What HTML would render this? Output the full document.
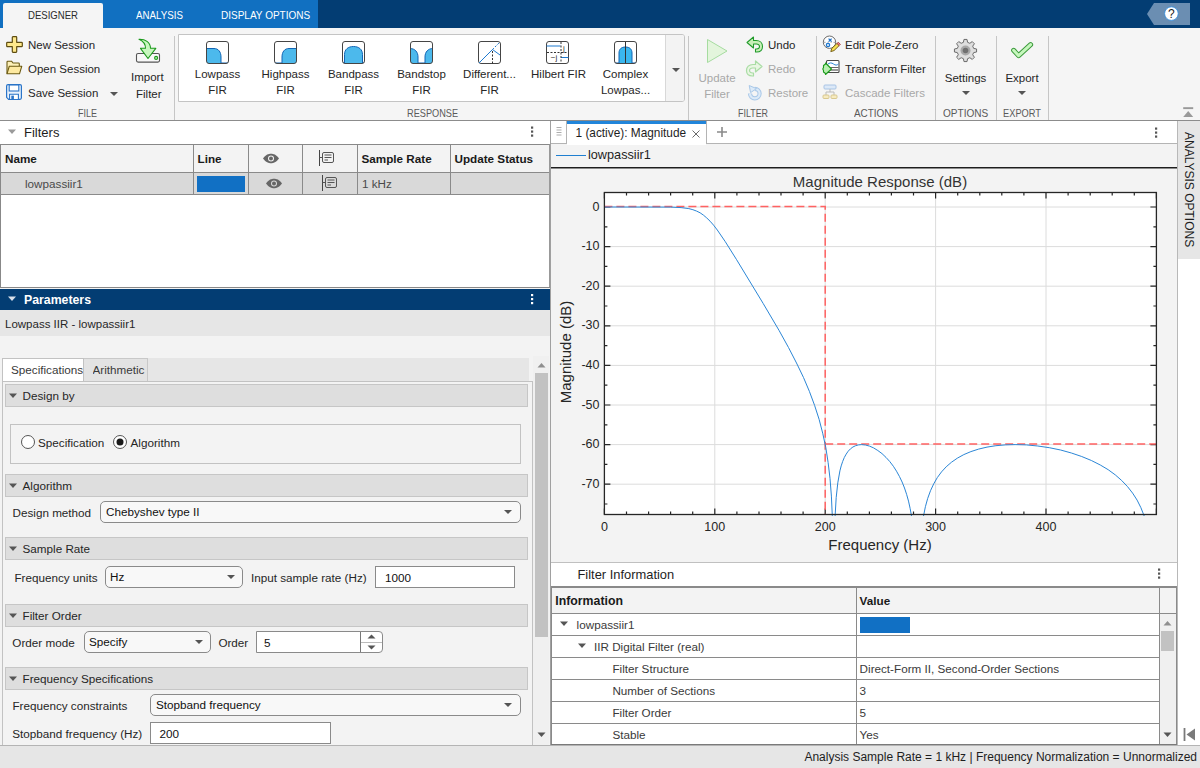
<!DOCTYPE html>
<html><head><meta charset="utf-8">
<style>
*{box-sizing:border-box;margin:0;padding:0}
html,body{width:1200px;height:768px;overflow:hidden;background:#f3f3f3;font-family:"Liberation Sans",sans-serif;font-size:12px;color:#212121}
.a{position:absolute}
.t{position:absolute;white-space:nowrap;line-height:1}
/* tab bar */
#tabbar{left:0;top:0;width:1200px;height:28px;background:#033d73}
#tabbar .lb{left:0;top:0;width:318px;height:28px;background:#1170c1}
#tstrip{left:0;top:28px;width:1200px;height:93px;background:#f5f5f5;border-bottom:1px solid #8c8c8c}
.sep{position:absolute;width:1px;background:#c6c6c6}
.slab{position:absolute;top:107.8px;transform-origin:0 0;font-size:11px;line-height:1;color:#5a5a5a}
.btxt{position:absolute;text-align:center;white-space:nowrap;line-height:1;font-size:11.5px;color:#262626}
.dis{color:#a8a8a8}
.tb{font-size:11.5px;color:#262626}
.tb.dis,.btxt.dis{color:#a8a8a8}
.bx{font-size:11.7px;color:#262626}
.sh{left:5px;width:523px;height:22.5px;background:#dedede;border:1px solid #c6c6c6}
.dd{background:#f8f8f8;border:1px solid #8a8a8a;border-radius:5px}
.ed{background:#fff;border:1px solid #8a8a8a}
.hb{font-size:11.7px;font-weight:bold;color:#1a1a1a}
.tri{width:0;height:0;border-left:4px solid transparent;border-right:4px solid transparent;border-top:4px solid #555}
</style></head><body>
<!-- TAB BAR -->
<div id="tabbar" class="a">
  <div class="a lb"></div>
  <div class="a" style="left:3px;top:3px;width:100px;height:25px;background:#f5f5f5;border-radius:2px 2px 0 0"></div>
  <div class="t" style="left:28px;top:9.8px;font-size:11px;color:#2b2b2b;transform:scaleX(.87);transform-origin:0 0">DESIGNER</div>
  <div class="t" style="left:135.7px;top:9.8px;font-size:11px;color:#fff;transform:scaleX(.887);transform-origin:0 0">ANALYSIS</div>
  <div class="t" style="left:220.7px;top:9.8px;font-size:11px;color:#fff;transform:scaleX(.91);transform-origin:0 0">DISPLAY OPTIONS</div>
  <svg class="a" style="left:1146px;top:3px" width="46" height="22" viewBox="0 0 46 22"><path d="M8 0H44V22H8L1 11Z" fill="#6b8eb2"/><circle cx="25.4" cy="10.6" r="6.8" fill="#fff" stroke="#2a8ae0" stroke-width=".8"/><text x="25.4" y="15" font-family="Liberation Sans" font-size="12" text-anchor="middle" fill="#222">?</text></svg>
</div>

<!-- TOOLSTRIP -->
<div id="tstrip" class="a"></div>
<div class="sep" style="left:174px;top:36px;height:84px"></div>
<div class="sep" style="left:688px;top:36px;height:84px"></div>
<div class="sep" style="left:816px;top:36px;height:84px"></div>
<div class="sep" style="left:935px;top:36px;height:84px"></div>
<div class="sep" style="left:996px;top:36px;height:84px"></div>
<div class="sep" style="left:1048px;top:36px;height:84px"></div>
<div class="slab" style="left:77.7px;transform:scaleX(0.818)">FILE</div>
<div class="slab" style="left:406.7px;transform:scaleX(0.835)">RESPONSE</div>
<div class="slab" style="left:737.7px;transform:scaleX(0.81)">FILTER</div>
<div class="slab" style="left:854px;transform:scaleX(0.9)">ACTIONS</div>
<div class="slab" style="left:943px;transform:scaleX(0.915)">OPTIONS</div>
<div class="slab" style="left:1003px;transform:scaleX(0.844)">EXPORT</div>
<!-- file -->
<svg class="a" style="left:6px;top:36px" width="17" height="17" viewBox="0 0 17 17"><path d="M6.3 1.5Q6.3 .7 7 .7H10Q10.7 .7 10.7 1.5V6.3H15.5Q16.3 6.3 16.3 7V10Q16.3 10.7 15.5 10.7H10.7V15.5Q10.7 16.3 10 16.3H7Q6.3 16.3 6.3 15.5V10.7H1.5Q.7 10.7 .7 10V7Q.7 6.3 1.5 6.3H6.3Z" fill="#ffe98c" stroke="#5e4d10" stroke-width="1.2" stroke-linejoin="round"/></svg>
<div class="t tb" style="left:28px;top:40px">New Session</div>
<svg class="a" style="left:5px;top:60px" width="18" height="15" viewBox="0 0 18 15"><path d="M2 13.8V2Q2 1.2 2.8 1.2H6.5L8 3H13.5Q14.3 3 14.3 3.8V6" fill="#fdf0b8" stroke="#6b5a12" stroke-width="1.1" stroke-linejoin="round"/><path d="M2 13.8L4.3 6.2H16.8L14.5 13.8Z" fill="#fde9a0" stroke="#6b5a12" stroke-width="1.1" stroke-linejoin="round"/></svg>
<div class="t tb" style="left:28px;top:64px">Open Session</div>
<svg class="a" style="left:6px;top:84px" width="16" height="16" viewBox="0 0 16 16"><path d="M2 .6H14Q15.4 .6 15.4 2V13.8Q15.4 15.3 14 15.3H2.6L.6 13.3V2Q.6 .6 2 .6Z" fill="#e8f1fb" stroke="#2a74c8" stroke-width="1.2"/><rect x="3.2" y="1" width="9.6" height="6" fill="#fff" stroke="#2a74c8" stroke-width="1.1"/><path d="M3.6 15V10.2H12.4V15" fill="#fff" stroke="#2a74c8" stroke-width="1.1"/><rect x="5.3" y="11.6" width="2.6" height="3.6" fill="#2a74c8"/></svg>
<div class="t tb" style="left:28px;top:88px">Save Session</div>
<div class="a tri" style="left:110px;top:92px"></div>
<svg class="a" style="left:135px;top:38px" width="26" height="26" viewBox="0 0 26 26"><rect x="1.5" y="15.5" width="23" height="8.6" rx="1.6" fill="#f8f8f8" stroke="#555" stroke-width="1.1"/><circle cx="21.1" cy="19.9" r="1.5" fill="#b8eeb0" stroke="#1c9a1c" stroke-width="1.1"/><path d="M4 1.3C10 1 15.5 4 15.5 10.3H20.8L13 20.5L5.5 10.3H10.5C10.5 6 8 3 4 1.3Z" fill="#c8f7bf" stroke="#1c9a1c" stroke-width="1.1" stroke-linejoin="round"/></svg>
<div class="t tb" style="left:131px;top:72.3px">Import</div>
<div class="t tb" style="left:136px;top:88.9px">Filter</div>
<!-- gallery -->
<div class="a" style="left:178px;top:34px;width:507px;height:68px;background:#fff;border:1px solid #c4c4c4;border-radius:0 3px 3px 0"></div>
<div class="a" style="left:665px;top:35px;width:1px;height:66px;background:#d8d8d8"></div>
<div class="a" style="left:666px;top:35px;width:18px;height:66px;background:#f3f3f3;border-radius:0 2px 2px 0"></div>
<div class="a tri" style="left:672px;top:68px"></div>
<svg class="a" style="left:205px;top:40px" width="25" height="25" viewBox="0 0 25 25"><defs><clipPath id="cb"><rect x="1.5" y="1.5" width="22" height="22" rx="2.5"/></clipPath></defs><g clip-path="url(#cb)"><path d="M1 8.5H9C13.5 8.5 16 12 16 17V23.2H24V24H1Z" fill="#4cb9ec"/><path d="M1 8.5H9C13.5 8.5 16 12 16 17V23H24" fill="none" stroke="#1265b5" stroke-width="1"/></g><rect x="1.5" y="1.5" width="22" height="22" rx="2.5" fill="none" stroke="#454545" stroke-width="1"/></svg>
<svg class="a" style="left:273px;top:40px" width="25" height="25" viewBox="0 0 25 25"><g clip-path="url(#cb)"><path d="M24 8.5H16C11.5 8.5 9 12 9 17V23.2H1V24H24Z" fill="#4cb9ec"/><path d="M24 8.5H16C11.5 8.5 9 12 9 17V23H1" fill="none" stroke="#1265b5" stroke-width="1"/></g><rect x="1.5" y="1.5" width="22" height="22" rx="2.5" fill="none" stroke="#454545" stroke-width="1"/></svg>
<svg class="a" style="left:341px;top:40px" width="25" height="25" viewBox="0 0 25 25"><g clip-path="url(#cb)"><path d="M3.5 24V14.5C3.5 9.5 7 6.5 12.5 6.5S21.5 9.5 21.5 14.5V24Z" fill="#4cb9ec"/><path d="M1 23H3.5V14.5C3.5 9.5 7 6.5 12.5 6.5S21.5 9.5 21.5 14.5V23H24" fill="none" stroke="#1265b5" stroke-width="1"/></g><rect x="1.5" y="1.5" width="22" height="22" rx="2.5" fill="none" stroke="#454545" stroke-width="1"/></svg>
<svg class="a" style="left:409px;top:40px" width="25" height="25" viewBox="0 0 25 25"><g clip-path="url(#cb)"><path d="M1 8.5C6 8.5 9 12 9 17V23H16V17C16 12 19 8.5 24 8.5V24H1Z" fill="#4cb9ec"/><path d="M1 8.5C6 8.5 9 12 9 17V23H16V17C16 12 19 8.5 24 8.5" fill="none" stroke="#1265b5" stroke-width="1"/></g><rect x="1.5" y="1.5" width="22" height="22" rx="2.5" fill="none" stroke="#454545" stroke-width="1"/></svg>
<svg class="a" style="left:477px;top:40px" width="25" height="25" viewBox="0 0 25 25"><rect x="1.5" y="1.5" width="22" height="22" rx="2.5" fill="#fff" stroke="#454545" stroke-width="1"/><path d="M2 23L15.5 9.5L23 15" fill="none" stroke="#1f7ad0" stroke-width="1"/><path d="M15.5 9.5L23 2" fill="none" stroke="#1f7ad0" stroke-width="1" stroke-dasharray="2 1.5"/><path d="M15.5 11V24" stroke="#333" stroke-width="1" stroke-dasharray="2 1.5"/></svg>
<svg class="a" style="left:545px;top:40px" width="25" height="25" viewBox="0 0 25 25"><rect x="1.5" y="1.5" width="22" height="22" rx="2.5" fill="#fff" stroke="#454545" stroke-width="1"/><path d="M1.5 6H15.5M16 17.5H23.5" stroke="#1f7ad0" stroke-width="1.2"/><path d="M2 12.5H23M16 2V23" stroke="#333" stroke-width="1" stroke-dasharray="2 1.5"/><text x="19" y="10.5" font-family="Liberation Sans" font-size="8" fill="#333" text-anchor="middle">j</text><text x="9" y="20" font-family="Liberation Sans" font-size="8" fill="#333" text-anchor="middle">−j</text></svg>
<svg class="a" style="left:613px;top:40px" width="25" height="25" viewBox="0 0 25 25"><g clip-path="url(#cb)"><path d="M6 24V13C6 9 8.5 7 12.5 7S19 9 19 13V24Z" fill="#3ab7ee"/><path d="M1 23H6V13C6 9 8.5 7 12.5 7S19 9 19 13V23H24" fill="none" stroke="#1265b5" stroke-width="1"/></g><path d="M12.5 1V24" stroke="#333" stroke-width="1"/><rect x="1.5" y="1.5" width="22" height="22" rx="2.5" fill="none" stroke="#454545" stroke-width="1"/></svg>
<div class="btxt" style="left:187px;top:68.6px;width:61px">Lowpass</div>
<div class="btxt" style="left:187px;top:84.6px;width:61px">FIR</div>
<div class="btxt" style="left:255px;top:68.6px;width:61px">Highpass</div>
<div class="btxt" style="left:255px;top:84.6px;width:61px">FIR</div>
<div class="btxt" style="left:323px;top:68.6px;width:61px">Bandpass</div>
<div class="btxt" style="left:323px;top:84.6px;width:61px">FIR</div>
<div class="btxt" style="left:391px;top:68.6px;width:61px">Bandstop</div>
<div class="btxt" style="left:391px;top:84.6px;width:61px">FIR</div>
<div class="btxt" style="left:459px;top:68.6px;width:61px">Different...</div>
<div class="btxt" style="left:459px;top:84.6px;width:61px">FIR</div>
<div class="btxt" style="left:523px;top:68.6px;width:71px">Hilbert FIR</div>
<div class="btxt" style="left:595px;top:68.6px;width:61px">Complex</div>
<div class="btxt" style="left:595px;top:84.6px;width:61px">Lowpas...</div>
<!-- filter section -->
<svg class="a" style="left:706px;top:38px" width="23" height="26" viewBox="0 0 23 26"><path d="M1.5 1.5L21 13L1.5 24.5Z" fill="#e3f5dc" stroke="#a6dca0" stroke-width="1" stroke-linejoin="round"/></svg>
<div class="btxt dis" style="left:687px;top:72.8px;width:60px">Update</div>
<div class="btxt dis" style="left:687px;top:88.7px;width:60px">Filter</div>
<svg class="a" style="left:746px;top:36px" width="18" height="17" viewBox="0 0 18 17"><path d="M1 6.5L7.5 1V4.5H10C14 4.5 16.5 7 16.5 10.5S14 16 10.5 16H9.5V13H10.5C12 13 13.5 12 13.5 10.5S12 8 10.5 8H7.5V12Z" fill="#c8f0b8" stroke="#1f9a2a" stroke-width="1.05" stroke-linejoin="round"/></svg>
<div class="t tb" style="left:768px;top:40px">Undo</div>
<svg class="a" style="left:745px;top:60px" width="18" height="17" viewBox="0 0 18 17"><path d="M17 6.5L10.5 1V4.5H8C4 4.5 1.5 7 1.5 10.5S4 16 7.5 16H8.5V13H7.5C6 13 4.5 12 4.5 10.5S6 8 7.5 8H10.5V12Z" fill="#e8f6e2" stroke="#a9dca4" stroke-width="1.2" stroke-linejoin="round"/></svg>
<div class="t tb dis" style="left:768px;top:64px">Redo</div>
<svg class="a" style="left:747px;top:84px" width="17" height="17" viewBox="0 0 17 17"><path d="M7.8 4.8A4.8 4.8 0 1 1 3 9.6" fill="none" stroke="#a9c8e8" stroke-width="4.2" stroke-linecap="butt"/><path d="M7.8 4.8A4.8 4.8 0 1 1 3 9.6" fill="none" stroke="#dceaf8" stroke-width="2.2"/><path d="M2.2 1.5L9.5 4.6L3.6 8.6Z" fill="#dceaf8" stroke="#a9c8e8" stroke-width="1" stroke-linejoin="round"/></svg>
<div class="t tb dis" style="left:768px;top:88px">Restore</div>
<!-- actions -->
<svg class="a" style="left:822px;top:35px" width="19" height="18" viewBox="0 0 19 18"><circle cx="7.5" cy="7.2" r="6.2" fill="#fff" stroke="#6a6a6a" stroke-width="1"/><path d="M2 7.3H3.6M5.6 7.3H6.6M8.6 7.3H9.6M11.5 7.3H13" stroke="#888" stroke-width=".8"/><path d="M6.6 3.6L9.6 6.6M9.6 3.6L6.6 6.6" stroke="#1a6fc8" stroke-width="1.2"/><circle cx="6" cy="10" r="1.7" fill="#dfeefa" stroke="#1f78d0" stroke-width="1.2"/><path d="M8.8 16.6L9.8 13.4L15 8.4L17.2 10.5L12 15.6Z" fill="#f8e050" stroke="#6a5208" stroke-width=".9" stroke-linejoin="round"/><path d="M15 8.4L16.2 7.2L18.4 9.3L17.2 10.5Z" fill="#f08888" stroke="#a03030" stroke-width=".8"/></svg>
<div class="t tb" style="left:845px;top:40px">Edit Pole-Zero</div>
<svg class="a" style="left:822px;top:59px" width="19" height="17" viewBox="0 0 19 17"><rect x="4.5" y="1.5" width="12.5" height="12" rx="1" fill="#fff" stroke="#4a4a4a" stroke-width="1.1"/><path d="M5.5 5.5C7.5 3.5 9.5 3.5 11.5 5S15 6.5 16.5 4.8" fill="none" stroke="#2a86d8" stroke-width="1"/><path d="M5 8.5H16.5" stroke="#666" stroke-width="1"/><rect x="8" y="10" width="8" height="2" fill="#999"/><path d="M1.5 6.5L3.5 5V4L9.5 10L3.5 15.5V14.5L1.5 13V11.5L.8 10L1.5 8.5Z" fill="#b8f0b0" stroke="#1a9a1a" stroke-width="1.1" stroke-linejoin="round"/></svg>
<div class="t tb" style="left:845px;top:64px">Transform Filter</div>
<svg class="a" style="left:822px;top:84px" width="17" height="16" viewBox="0 0 17 16"><rect x="2" y="1" width="12" height="4" rx="1" fill="#dce9f8" stroke="#a9c4e4" stroke-width="1"/><path d="M8 5V8M4 8H12M4 8V11M12 8V11" stroke="#bbb" stroke-width="1" fill="none"/><rect x="1" y="11" width="6" height="3.5" rx="1" fill="#f7ebc0" stroke="#d8c890" stroke-width="1"/><rect x="9" y="11" width="6" height="3.5" rx="1" fill="#f7ebc0" stroke="#d8c890" stroke-width="1"/></svg>
<div class="t tb dis" style="left:845px;top:88px">Cascade Filters</div>
<!-- options/export -->
<svg class="a" style="left:953px;top:38px" width="25" height="25" viewBox="0 0 25 25"><path id="gear" d="M10.8 1H14.2L14.8 4.2L17.3 5.3L20 3.4L22.4 5.8L20.5 8.5L21.6 11L24.8 11.6V15L21.6 15.6L20.5 18L22.4 20.8L20 23.2L17.3 21.3L14.8 22.4L14.2 25.6H10.8L10.2 22.4L7.7 21.3L5 23.2L2.6 20.8L4.5 18L3.4 15.6L.2 15V11.6L3.4 11L4.5 8.5L2.6 5.8L5 3.4L7.7 5.3L10.2 4.2Z" transform="translate(12.5 12.5) scale(.9) translate(-12.5 -13.3)" fill="#dedede" stroke="#6a6a6a" stroke-width="1.1" stroke-linejoin="round"/><circle cx="12.5" cy="12.5" r="5" fill="#a8a8a8"/><circle cx="12.5" cy="12.5" r="2.8" fill="#707070"/></svg>
<div class="btxt" style="left:935px;top:72.8px;width:61px">Settings</div>
<div class="a tri" style="left:962px;top:91px"></div>
<svg class="a" style="left:1010px;top:40px" width="24" height="20" viewBox="0 0 24 20"><path d="M3.6 10.3L8.6 15.6L20.6 4.6" fill="none" stroke="#3c9a3c" stroke-width="5" stroke-linecap="round" stroke-linejoin="round"/><path d="M3.6 10.3L8.6 15.6L20.6 4.6" fill="none" stroke="#c6f7bd" stroke-width="3" stroke-linecap="round" stroke-linejoin="round"/></svg>
<div class="btxt" style="left:992px;top:72.8px;width:60px">Export</div>
<div class="a tri" style="left:1018px;top:91px"></div>
<svg class="a" style="left:1183px;top:107px" width="11" height="11" viewBox="0 0 11 11"><rect x=".2" y=".2" width="10" height="1.9" fill="#999"/><path d="M5.2 4L10.2 10H.2Z" fill="#9a9a9a"/></svg>

<!-- LEFT PANEL -->
<div class="a" style="left:0;top:121px;width:550px;height:167px;background:#fff"></div>
<svg class="a" style="left:7px;top:129px" width="10" height="6" viewBox="0 0 10 6"><path d="M1 .5H9L5 5Z" fill="#9a9a9a"/></svg>
<div class="t" style="left:24px;top:126px;font-size:13px;color:#1e1e1e">Filters</div>
<svg class="a" style="left:530px;top:126px" width="4" height="12" viewBox="0 0 4 12"><rect x="1" y=".5" width="2.2" height="2.2" fill="#555"/><rect x="1" y="4.5" width="2.2" height="2.2" fill="#555"/><rect x="1" y="8.5" width="2.2" height="2.2" fill="#555"/></svg>
<div class="a" style="left:0;top:144px;width:550px;height:144px;border:1px solid #888;border-right-color:#999;background:#fff"></div>
<div class="a" style="left:1px;top:145px;width:548px;height:27px;background:#f3f3f3"></div>
<div class="a" style="left:1px;top:172px;width:548px;height:1px;background:#8a8a8a"></div>
<div class="a" style="left:1px;top:173px;width:548px;height:21px;background:#d9d9d9"></div>
<div class="a" style="left:1px;top:194px;width:548px;height:1px;background:#8a8a8a"></div>
<div class="a" style="left:193px;top:145px;width:1px;height:49px;background:#8a8a8a"></div>
<div class="a" style="left:248px;top:145px;width:1px;height:49px;background:#8a8a8a"></div>
<div class="a" style="left:302px;top:145px;width:1px;height:49px;background:#8a8a8a"></div>
<div class="a" style="left:357px;top:145px;width:1px;height:49px;background:#8a8a8a"></div>
<div class="a" style="left:450px;top:145px;width:1px;height:49px;background:#8a8a8a"></div>
<div class="a" style="left:0;top:287px;width:550px;height:1px;background:#888"></div>
<div class="t hb" style="left:5px;top:153px">Name</div>
<div class="t hb" style="left:197.5px;top:153px">Line</div>
<div class="t hb" style="left:361.5px;top:153px">Sample Rate</div>
<div class="t hb" style="left:454.5px;top:153px">Update Status</div>
<svg class="a" style="left:262px;top:153px" width="18" height="11" viewBox="0 0 18 11"><path d="M1 5.5C4 1.5 6.5 .8 9 .8S14 1.5 17 5.5C14 9.5 11.5 10.2 9 10.2S4 9.5 1 5.5Z" fill="#666"/><circle cx="9" cy="5.5" r="3" fill="#f3f3f3"/><circle cx="9" cy="5.5" r="2" fill="#666"/></svg>
<svg class="a" style="left:318px;top:150px" width="17" height="16" viewBox="0 0 17 16"><path d="M1.5 0V16" stroke="#444" stroke-width="1"/><rect x="4.5" y="2.5" width="11" height="10" rx="1.5" fill="none" stroke="#555" stroke-width="1"/><path d="M6.5 5H13.5M6.5 7.5H13.5M6.5 10H10" stroke="#555" stroke-width="1"/><path d="M1.5 7.5H4.5" stroke="#555" stroke-width="1"/></svg>
<div class="t bx" style="left:25px;top:178px;color:#4a4a4a">lowpassiir1</div>
<div class="a" style="left:197px;top:176px;width:48px;height:16px;background:#1170c4"></div>
<svg class="a" style="left:265px;top:178px" width="18" height="11" viewBox="0 0 18 11"><path d="M1 5.5C4 1.5 6.5 .8 9 .8S14 1.5 17 5.5C14 9.5 11.5 10.2 9 10.2S4 9.5 1 5.5Z" fill="#666"/><circle cx="9" cy="5.5" r="3" fill="#d9d9d9"/><circle cx="9" cy="5.5" r="2" fill="#666"/></svg>
<svg class="a" style="left:321px;top:175px" width="17" height="16" viewBox="0 0 17 16"><path d="M1.5 0V16" stroke="#444" stroke-width="1"/><rect x="4.5" y="2.5" width="11" height="10" rx="1.5" fill="none" stroke="#555" stroke-width="1"/><path d="M6.5 5H13.5M6.5 7.5H13.5M6.5 10H10" stroke="#555" stroke-width="1"/><path d="M1.5 7.5H4.5" stroke="#555" stroke-width="1"/></svg>
<div class="t bx" style="left:362px;top:178px;color:#4a4a4a">1 kHz</div>
<div class="a" style="left:550px;top:121px;width:1px;height:624px;background:#a0a0a0"></div>

<!-- PARAMETERS HEADER -->
<div class="a" style="left:0;top:289px;width:550px;height:21px;background:#033d73"></div>
<svg class="a" style="left:7px;top:296px" width="10" height="6" viewBox="0 0 10 6"><path d="M1 .5H9L5 5Z" fill="#d8e0ea"/></svg>
<div class="t" style="left:24px;top:294px;font-size:12.3px;font-weight:bold;color:#fff">Parameters</div>
<svg class="a" style="left:530px;top:293px" width="4" height="12" viewBox="0 0 4 12"><rect x="1" y="1" width="2.2" height="2.2" fill="#fff"/><rect x="1" y="5" width="2.2" height="2.2" fill="#fff"/><rect x="1" y="9" width="2.2" height="2.2" fill="#fff"/></svg>
<div class="a" style="left:0;top:310px;width:550px;height:26px;background:#e6e6e6"></div>
<div class="t bx" style="left:5px;top:318.5px;font-size:11.5px;color:#262626">Lowpass IIR - lowpassiir1</div>
<!-- tabs -->
<div class="a" style="left:2px;top:358px;width:527px;height:24px;background:#e6e6e6"></div>
<div class="a" style="left:2px;top:358px;width:82px;height:24px;background:#fff;border:1px solid #c2c2c2;border-bottom:none"></div>
<div class="a" style="left:84px;top:358px;width:64px;height:23px;background:#e3e3e3;border:1px solid #c8c8c8;border-bottom:none;border-left:none"></div>
<div class="a" style="left:2px;top:381px;width:531px;height:364px;border:1px solid #c2c2c2;border-bottom:none"></div>
<div class="t bx" style="left:11px;top:364px;color:#3a3a3a;width:72px;overflow:hidden">Specifications</div>
<div class="t bx" style="left:92.5px;top:364px;color:#3a3a3a;width:54px;overflow:hidden">Arithmetic</div>
<!-- scrollbar -->
<div class="a" style="left:533px;top:356px;width:16px;height:389px;background:#f0f0f0"></div>
<svg class="a" style="left:537px;top:362px" width="9" height="6" viewBox="0 0 9 6"><path d="M.5 5.5L4.5 1L8.5 5.5Z" fill="#8f8f8f"/></svg>
<div class="a" style="left:535px;top:373px;width:13px;height:264px;background:#c2c2c2"></div>
<svg class="a" style="left:537px;top:732px" width="9" height="6" viewBox="0 0 9 6"><path d="M.5 .5L4.5 5L8.5 .5Z" fill="#555"/></svg>
<!-- section headers -->
<div class="a sh" style="top:384px"></div>
<div class="a sh" style="top:474px"></div>
<div class="a sh" style="top:537px"></div>
<div class="a sh" style="top:604px"></div>
<div class="a sh" style="top:667px"></div>
<svg class="a" style="left:8px;top:393px" width="10" height="6" viewBox="0 0 10 6"><path d="M1 .5H9L5 5Z" fill="#555"/></svg>
<svg class="a" style="left:8px;top:483px" width="10" height="6" viewBox="0 0 10 6"><path d="M1 .5H9L5 5Z" fill="#555"/></svg>
<svg class="a" style="left:8px;top:546px" width="10" height="6" viewBox="0 0 10 6"><path d="M1 .5H9L5 5Z" fill="#555"/></svg>
<svg class="a" style="left:8px;top:613px" width="10" height="6" viewBox="0 0 10 6"><path d="M1 .5H9L5 5Z" fill="#555"/></svg>
<svg class="a" style="left:8px;top:676px" width="10" height="6" viewBox="0 0 10 6"><path d="M1 .5H9L5 5Z" fill="#555"/></svg>
<div class="t bx" style="left:22.5px;top:390px">Design by</div>
<div class="t bx" style="left:22.5px;top:480px">Algorithm</div>
<div class="t bx" style="left:22.5px;top:543px">Sample Rate</div>
<div class="t bx" style="left:22.5px;top:610px">Filter Order</div>
<div class="t bx" style="left:22.5px;top:673px">Frequency Specifications</div>
<!-- design by group -->
<div class="a" style="left:10px;top:424px;width:511px;height:40px;border:1px solid #c2c2c2"></div>
<svg class="a" style="left:20px;top:434px" width="16" height="16" viewBox="0 0 16 16"><circle cx="8" cy="8" r="6.5" fill="#fff" stroke="#555" stroke-width="1"/></svg>
<div class="t bx" style="left:38px;top:437px">Specification</div>
<svg class="a" style="left:112px;top:434px" width="16" height="16" viewBox="0 0 16 16"><circle cx="8" cy="8" r="6.5" fill="#fff" stroke="#555" stroke-width="1"/><circle cx="8" cy="8" r="3.5" fill="#1a1a1a"/></svg>
<div class="t bx" style="left:130.5px;top:437px">Algorithm</div>
<!-- controls -->
<div class="t bx" style="left:12.5px;top:507px">Design method</div>
<div class="a dd" style="left:100px;top:501px;width:421px;height:22px"></div>
<div class="t bx" style="left:106px;top:506px;color:#111">Chebyshev type II</div>
<div class="a tri" style="left:504px;top:510px"></div>
<div class="t bx" style="left:14.4px;top:572px">Frequency units</div>
<div class="a dd" style="left:105px;top:566px;width:138px;height:22px"></div>
<div class="t bx" style="left:110px;top:571px;color:#111">Hz</div>
<div class="a tri" style="left:227px;top:575px"></div>
<div class="t bx" style="left:251px;top:572px">Input sample rate (Hz)</div>
<div class="a ed" style="left:375px;top:566px;width:140px;height:22px"></div>
<div class="t bx" style="left:385px;top:572px;color:#111">1000</div>
<div class="t bx" style="left:12.3px;top:637px">Order mode</div>
<div class="a dd" style="left:84px;top:631px;width:127px;height:22px"></div>
<div class="t bx" style="left:89px;top:636px;color:#111">Specify</div>
<div class="a tri" style="left:195px;top:640px"></div>
<div class="t bx" style="left:218.4px;top:637px">Order</div>
<div class="a ed" style="left:256px;top:631px;width:127px;height:22px;border-radius:0 4px 4px 0"></div>
<div class="a" style="left:360px;top:632px;width:1px;height:20px;background:#777"></div>
<div class="a" style="left:361px;top:641.5px;width:21px;height:1px;background:#bbb"></div>
<svg class="a" style="left:367px;top:634px" width="9" height="5" viewBox="0 0 9 5"><path d="M.5 4.5L4.5 .5L8.5 4.5Z" fill="#555"/></svg>
<svg class="a" style="left:367px;top:645px" width="9" height="5" viewBox="0 0 9 5"><path d="M.5 .5L4.5 4.5L8.5 .5Z" fill="#555"/></svg>
<div class="t bx" style="left:264px;top:637px;color:#111">5</div>
<div class="t bx" style="left:12.4px;top:700px">Frequency constraints</div>
<div class="a dd" style="left:150px;top:694px;width:371px;height:22px"></div>
<div class="t bx" style="left:156px;top:699px;color:#111">Stopband frequency</div>
<div class="a tri" style="left:504px;top:703px"></div>
<div class="t bx" style="left:12.3px;top:728px">Stopband frequency (Hz)</div>
<div class="a ed" style="left:150px;top:722px;width:181px;height:22px"></div>
<div class="t bx" style="left:159.5px;top:728px;color:#111">200</div>

<!-- RIGHT DOC AREA -->
<div class="a" style="left:551px;top:121px;width:626px;height:23px;background:#fff;border-bottom:1px solid #b4b4b4"></div>
<div class="a" style="left:551px;top:121px;width:16px;height:23px;background:#fff;border-right:1px solid #b4b4b4;border-bottom:1px solid #b4b4b4"></div>
<svg class="a" style="left:555px;top:126px" width="8" height="10" viewBox="0 0 8 10"><path d="M1.5 1.5H6.5M1.5 4H6.5M1.5 6.5H6.5M1.5 9H6.5" stroke="#8a8a8a" stroke-width=".7"/></svg>
<div class="a" style="left:567px;top:121px;width:139px;height:24px;background:#fff;border-top:3px solid #2185da"></div>
<div class="a" style="left:706px;top:121px;width:1px;height:23px;background:#b4b4b4"></div>
<div class="t" style="left:575.5px;top:128px;font-size:11.85px;color:#1e1e1e">1 (active): Magnitude</div>
<svg class="a" style="left:691px;top:129px" width="10" height="10" viewBox="0 0 10 10"><path d="M1.5 1.5L8.5 8.5M8.5 1.5L1.5 8.5" stroke="#444" stroke-width=".8"/></svg>
<svg class="a" style="left:716px;top:126px" width="12" height="12" viewBox="0 0 12 12"><path d="M6 1V11M1 6H11" stroke="#8a8a8a" stroke-width="1.6"/></svg>
<svg class="a" style="left:1154px;top:127px" width="4" height="12" viewBox="0 0 4 12"><rect x="1" y=".5" width="2.2" height="2.2" fill="#555"/><rect x="1" y="4.5" width="2.2" height="2.2" fill="#555"/><rect x="1" y="8.5" width="2.2" height="2.2" fill="#555"/></svg>
<div class="a" style="left:551px;top:145px;width:626px;height:22px;background:#f3f3f3"></div>
<div class="a" style="left:556px;top:154.5px;width:30px;height:1.2px;background:#1f7fd0"></div>
<div class="t" style="left:588px;top:149px;font-size:12.7px;color:#1e1e1e">lowpassiir1</div>
<div class="a" style="left:551px;top:167px;width:626px;height:1px;background:#1e1e1e"></div><div class="a" style="left:551px;top:168px;width:626px;height:1px;background:#8a8a8a"></div>
<div class="a" style="left:551px;top:169px;width:626px;height:393px;background:#f3f3f3"></div>
<div class="a" style="left:551px;top:562px;width:626px;height:1px;background:#c0c0c0"></div>
<svg class="a" style="left:551px;top:169px" width="626" height="393" viewBox="551 169 626 393"><rect x="604.4" y="192.5" width="552" height="322" fill="#fff"/><path d="M714.8 192.5V514.5 M825.2 192.5V514.5 M935.6 192.5V514.5 M1046.0 192.5V514.5 M604.4 207.0H1156.4 M604.4 246.6H1156.4 M604.4 286.2H1156.4 M604.4 325.8H1156.4 M604.4 365.4H1156.4 M604.4 405.0H1156.4 M604.4 444.6H1156.4 M604.4 484.2H1156.4" stroke="#dcdcdc" stroke-width="1" fill="none"/><path d="M604.4 192.5v6M604.4 514.5v-6 M626.5 192.5v3M626.5 514.5v-3 M648.6 192.5v3M648.6 514.5v-3 M670.6 192.5v3M670.6 514.5v-3 M692.7 192.5v3M692.7 514.5v-3 M714.8 192.5v6M714.8 514.5v-6 M736.9 192.5v3M736.9 514.5v-3 M759.0 192.5v3M759.0 514.5v-3 M781.0 192.5v3M781.0 514.5v-3 M803.1 192.5v3M803.1 514.5v-3 M825.2 192.5v6M825.2 514.5v-6 M847.3 192.5v3M847.3 514.5v-3 M869.4 192.5v3M869.4 514.5v-3 M891.4 192.5v3M891.4 514.5v-3 M913.5 192.5v3M913.5 514.5v-3 M935.6 192.5v6M935.6 514.5v-6 M957.7 192.5v3M957.7 514.5v-3 M979.8 192.5v3M979.8 514.5v-3 M1001.8 192.5v3M1001.8 514.5v-3 M1023.9 192.5v3M1023.9 514.5v-3 M1046.0 192.5v6M1046.0 514.5v-6 M1068.1 192.5v3M1068.1 514.5v-3 M1090.2 192.5v3M1090.2 514.5v-3 M1112.2 192.5v3M1112.2 514.5v-3 M1134.3 192.5v3M1134.3 514.5v-3 M1156.4 192.5v6M1156.4 514.5v-6 M604.4 207.0h6M1156.4 207.0h-6 M604.4 226.8h3M1156.4 226.8h-3 M604.4 246.6h6M1156.4 246.6h-6 M604.4 266.4h3M1156.4 266.4h-3 M604.4 286.2h6M1156.4 286.2h-6 M604.4 306.0h3M1156.4 306.0h-3 M604.4 325.8h6M1156.4 325.8h-6 M604.4 345.6h3M1156.4 345.6h-3 M604.4 365.4h6M1156.4 365.4h-6 M604.4 385.2h3M1156.4 385.2h-3 M604.4 405.0h6M1156.4 405.0h-6 M604.4 424.8h3M1156.4 424.8h-3 M604.4 444.6h6M1156.4 444.6h-6 M604.4 464.4h3M1156.4 464.4h-3 M604.4 484.2h6M1156.4 484.2h-6 M604.4 504.0h3M1156.4 504.0h-3" stroke="#262626" stroke-width="1.2" fill="none"/><path d="M604.4 206.5H825.2V514.5M825.2 444.1H1156.4" stroke="#ff6262" stroke-width="1.5" stroke-dasharray="8 4" fill="none"/><path d="M604.4 207.0 670.4 207.1 681.1 207.6 688.8 208.6 692.9 209.7 696.6 211.1 700.1 212.8 703.4 215.1 706.7 217.9 710.1 221.2 713.6 225.2 717.3 230.0 725.3 241.7 736.6 259.7 763.2 303.5 779.1 330.5 788.5 347.5 796.5 363.0 803.5 377.5 809.4 391.4 814.6 405.4 819.1 419.3 822.7 433.2 825.8 447.5 828.1 462.4 830.0 478.4 831.4 496.1 832.3 516.0 M835.1 516.0 836.2 497.5 837.8 482.8 839.9 470.9 841.2 465.9 842.7 461.4 844.3 457.5 846.2 454.1 848.2 451.2 850.5 448.8 852.9 447.0 855.6 445.7 858.5 444.9 861.5 444.6 865.4 445.0 869.5 446.1 873.6 447.9 877.8 450.5 882.0 453.6 886.0 457.4 889.8 461.6 893.4 466.3 896.5 471.2 899.4 476.4 902.1 482.0 904.5 488.0 906.6 494.3 908.5 501.1 910.1 508.3 911.5 516.0 M923.5 516.0 925.4 506.7 927.7 498.4 930.5 490.7 933.7 483.9 937.3 477.6 941.5 471.9 946.2 466.8 951.4 462.3 957.3 458.2 963.8 454.6 970.9 451.6 978.6 449.1 987.0 447.1 995.9 445.7 1005.3 444.9 1015.1 444.6 1026.3 444.9 1037.8 446.0 1049.3 447.7 1060.6 450.0 1071.4 453.0 1081.7 456.5 1091.4 460.5 1100.3 465.0 1108.2 469.7 1115.3 474.9 1121.7 480.5 1127.5 486.6 1132.6 493.1 1137.1 500.1 1140.9 507.7 1144.2 516.0" stroke="#2b86d6" stroke-width="1" fill="none"/><rect x="604.4" y="192.5" width="552.0000000000001" height="322.0" fill="none" stroke="#262626" stroke-width="1.3"/><g font-family="Liberation Sans" font-size="12.5" fill="#262626"><text x="599.5" y="210.5" text-anchor="end">0</text><text x="599.5" y="250.1" text-anchor="end">-10</text><text x="599.5" y="289.7" text-anchor="end">-20</text><text x="599.5" y="329.3" text-anchor="end">-30</text><text x="599.5" y="368.9" text-anchor="end">-40</text><text x="599.5" y="408.5" text-anchor="end">-50</text><text x="599.5" y="448.1" text-anchor="end">-60</text><text x="599.5" y="487.7" text-anchor="end">-70</text><text x="604.4" y="530.5" text-anchor="middle">0</text><text x="714.8" y="530.5" text-anchor="middle">100</text><text x="825.2" y="530.5" text-anchor="middle">200</text><text x="935.6" y="530.5" text-anchor="middle">300</text><text x="1046.0" y="530.5" text-anchor="middle">400</text></g><text x="880" y="186.7" text-anchor="middle" font-family="Liberation Sans" font-size="15" fill="#333">Magnitude Response (dB)</text><text x="880" y="550" text-anchor="middle" font-family="Liberation Sans" font-size="15" fill="#262626">Frequency (Hz)</text><text transform="translate(571 352) rotate(-90)" text-anchor="middle" font-family="Liberation Sans" font-size="15" fill="#262626">Magnitude (dB)</text></svg>
<!-- FILTER INFO -->
<div class="a" style="left:551px;top:563px;width:626px;height:23px;background:#fff"></div>
<div class="t" style="left:577.5px;top:568.5px;font-size:12.9px;color:#1e1e1e">Filter Information</div>
<svg class="a" style="left:1157px;top:568px" width="4" height="12" viewBox="0 0 4 12"><rect x="1" y=".5" width="2.2" height="2.2" fill="#555"/><rect x="1" y="4.5" width="2.2" height="2.2" fill="#555"/><rect x="1" y="8.5" width="2.2" height="2.2" fill="#555"/></svg>
<div class="a" style="left:551px;top:586px;width:626px;height:159px;background:#fff;border:1px solid #8a8a8a;border-top:2px solid #8a8a8a;border-bottom:none"></div>
<div class="a" style="left:552px;top:588px;width:624px;height:25px;background:#f3f3f3"></div>
<div class="a" style="left:552px;top:613px;width:607px;height:1px;background:#8a8a8a"></div>
<div class="a" style="left:552px;top:635px;width:607px;height:1px;background:#8a8a8a"></div>
<div class="a" style="left:552px;top:657px;width:607px;height:1px;background:#8a8a8a"></div>
<div class="a" style="left:552px;top:679px;width:607px;height:1px;background:#8a8a8a"></div>
<div class="a" style="left:552px;top:701px;width:607px;height:1px;background:#8a8a8a"></div>
<div class="a" style="left:552px;top:723px;width:607px;height:1px;background:#8a8a8a"></div>
<div class="a" style="left:1159px;top:613px;width:17px;height:1px;background:#8a8a8a"></div>
<div class="a" style="left:856px;top:588px;width:1px;height:157px;background:#8a8a8a"></div>
<div class="a" style="left:1159px;top:588px;width:1px;height:157px;background:#8a8a8a"></div>
<div class="a" style="left:1160px;top:614px;width:16px;height:131px;background:#f0f0f0"></div>
<div class="a" style="left:1161px;top:631px;width:13px;height:20px;background:#c2c2c2"></div>
<svg class="a" style="left:1163px;top:620px" width="9" height="6" viewBox="0 0 9 6"><path d="M.5 5.5L4.5 1L8.5 5.5Z" fill="#8f8f8f"/></svg>
<svg class="a" style="left:1163px;top:732px" width="9" height="6" viewBox="0 0 9 6"><path d="M.5 .5L4.5 5L8.5 .5Z" fill="#555"/></svg>
<div class="t hb" style="left:555.3px;top:595px;font-size:12.3px">Information</div>
<div class="t hb" style="left:859.6px;top:595px">Value</div>
<svg class="a" style="left:559px;top:621px" width="10" height="6" viewBox="0 0 10 6"><path d="M1 .5H9L5 5Z" fill="#555"/></svg>
<div class="t bx" style="left:576.6px;top:619px;color:#3a3a3a">lowpassiir1</div>
<div class="a" style="left:860px;top:617px;width:50px;height:16px;background:#1170c4"></div>
<svg class="a" style="left:577px;top:643px" width="10" height="6" viewBox="0 0 10 6"><path d="M1 .5H9L5 5Z" fill="#555"/></svg>
<div class="t bx" style="left:594px;top:641px;color:#3a3a3a">IIR Digital Filter (real)</div>
<div class="t bx" style="left:612.4px;top:663px;color:#3a3a3a">Filter Structure</div>
<div class="t bx" style="left:612.4px;top:685px;color:#3a3a3a">Number of Sections</div>
<div class="t bx" style="left:612.4px;top:707px;color:#3a3a3a">Filter Order</div>
<div class="t bx" style="left:612.4px;top:729px;color:#3a3a3a">Stable</div>
<div class="t bx" style="left:859.6px;top:663px;color:#3a3a3a">Direct-Form II, Second-Order Sections</div>
<div class="t bx" style="left:859.6px;top:685px;color:#3a3a3a">3</div>
<div class="t bx" style="left:859.6px;top:707px;color:#3a3a3a">5</div>
<div class="t bx" style="left:859.6px;top:729px;color:#3a3a3a">Yes</div>
<!-- ANALYSIS OPTIONS -->
<div class="a" style="left:1177px;top:121px;width:1px;height:624px;background:#b8b8b8"></div>
<div class="a" style="left:1178px;top:121px;width:22px;height:624px;background:#fff"></div>
<div class="a" style="left:1178px;top:121px;width:22px;height:138px;background:#e6e6e6"></div>
<div class="t" style="left:1183px;top:132px;font-size:12px;color:#1e1e1e;writing-mode:vertical-rl">ANALYSIS OPTIONS</div>
<svg class="a" style="left:1183px;top:727px" width="13" height="15" viewBox="0 0 13 15"><path d="M1.5 1V14" stroke="#7a7a7a" stroke-width="1.8"/><path d="M12 1.5L3.5 7.5L12 13.5Z" fill="#7a7a7a"/></svg>
<!-- STATUS BAR -->
<div class="a" style="left:0;top:745px;width:1200px;height:23px;background:#e6e6e6;border-top:1px solid #b4b4b4"></div><div class="a" style="left:551px;top:744px;width:626px;height:1px;background:#7a7a7a"></div>
<div class="t" style="right:3px;top:751px;font-size:12px;color:#1e1e1e">Analysis Sample Rate = 1 kHz | Frequency Normalization = Unnormalized</div>
</body></html>
